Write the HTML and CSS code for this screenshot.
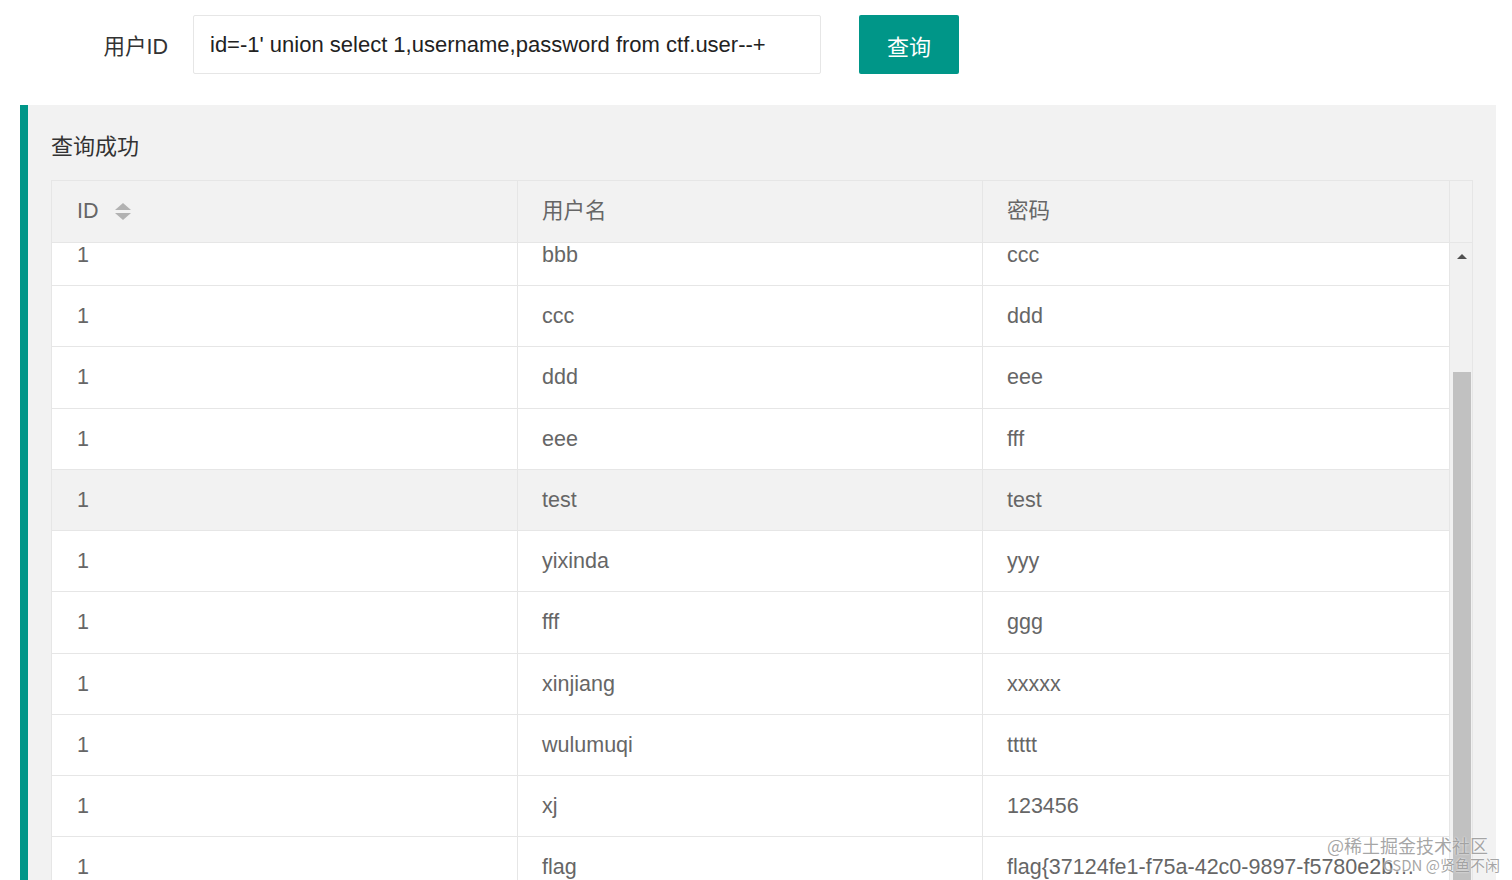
FILE: index.html
```html
<!DOCTYPE html>
<html lang="zh-CN">
<head>
<meta charset="utf-8">
<title>查询</title>
<link rel="stylesheet" href="styles.css">
</head>
<body>
<div class="form">
  <label class="label">用户ID</label>
  <div class="input">id=-1' union select 1,username,password from ctf.user--+</div>
  <button class="btn">查询</button>
</div>
<div class="panel">
  <div class="title">查询成功</div>
  <div class="table">
    <div class="thead">
      <div class="th">ID <span class="sort"><i class="up"></i><i class="down"></i></span></div>
      <div class="th">用户名</div>
      <div class="th">密码</div>
      <div class="th gutter"></div>
    </div>
    <div class="tbody">
      <div class="rows">
        <div class="tr first"><div class="td">1</div><div class="td">bbb</div><div class="td">ccc</div></div>
        <div class="tr"><div class="td">1</div><div class="td">ccc</div><div class="td">ddd</div></div>
        <div class="tr"><div class="td">1</div><div class="td">ddd</div><div class="td">eee</div></div>
        <div class="tr"><div class="td">1</div><div class="td">eee</div><div class="td">fff</div></div>
        <div class="tr hover"><div class="td">1</div><div class="td">test</div><div class="td">test</div></div>
        <div class="tr"><div class="td">1</div><div class="td">yixinda</div><div class="td">yyy</div></div>
        <div class="tr"><div class="td">1</div><div class="td">fff</div><div class="td">ggg</div></div>
        <div class="tr"><div class="td">1</div><div class="td">xinjiang</div><div class="td">xxxxx</div></div>
        <div class="tr"><div class="td">1</div><div class="td">wulumuqi</div><div class="td">ttttt</div></div>
        <div class="tr"><div class="td">1</div><div class="td">xj</div><div class="td">123456</div></div>
        <div class="tr"><div class="td">1</div><div class="td">flag</div><div class="td">flag{37124fe1-f75a-42c0-9897-f5780e2b4c1d}</div></div>
      </div>
      <div class="scrollbar">
        <div class="arrow"><i></i></div>
        <div class="track"><div class="thumb"></div></div>
      </div>
    </div>
  </div>
</div>
<div class="watermark">
  <div class="wm1">@稀土掘金技术社区</div>
  <div class="wm2">CSDN @贤鱼不闲</div>
</div>
</body>
</html>
```
FILE: styles.css
```css
html, body {
  margin: 0;
  padding: 0;
  background: #fff;
  font-family: "Liberation Sans", Arial, "Noto Sans CJK SC", sans-serif;
  overflow: hidden;
  height: 880px;
}
.form {
  display: flex;
  align-items: center;
  padding-top: 15px;
  height: 59px;
}
.label {
  width: 168px;
  text-align: right;
  font-size: 21.5px;
  color: #333;
  margin-right: 25px;
}
.input {
  box-sizing: border-box;
  width: 628px;
  height: 59px;
  border: 1px solid #e6e6e6;
  border-radius: 2px;
  padding-left: 16px;
  font-size: 22px;
  line-height: 57px;
  color: #222;
  margin-right: 38px;
}
.btn {
  width: 100px;
  height: 59px;
  border: 0;
  border-radius: 2px;
  background: #009688;
  color: #fff;
  font-family: "Liberation Sans", "Noto Sans CJK SC", sans-serif;
  font-size: 22px;
  padding: 0;
}
.panel {
  margin: 31px 16px 0 20px;
  border-left: 8px solid #009688;
  background: #f2f2f2;
  padding: 27px 23px 0 23px;
  height: 800px;
}
.title {
  font-size: 22px;
  line-height: 30px;
  color: #333;
  margin-bottom: 18px;
}
.table {
  border: 1px solid #e6e6e6;
  border-bottom: 0;
  background: #fff;
}
.thead {
  display: grid;
  grid-template-columns: 465px 465px 1fr 23px;
  background: #f2f2f2;
  height: 61px;
  border-bottom: 1px solid #e6e6e6;
}
.th {
  font-size: 21.5px;
  color: #666;
  line-height: 61px;
  padding-left: 24px;
  border-left: 1px solid #e6e6e6;
  display: flex;
  align-items: center;
}
.th:first-child { border-left: 0; padding-left: 25px; }
.th.gutter { padding: 0; }
.sort {
  display: inline-flex;
  flex-direction: column;
  gap: 3px;
  margin-left: 16px;
}
.sort i {
  width: 0;
  height: 0;
  border-left: 8px solid transparent;
  border-right: 8px solid transparent;
}
.sort .up { border-bottom: 7px solid #b2b2b2; }
.sort .down { border-top: 7px solid #b2b2b2; }
.tbody {
  display: flex;
  height: 640px;
  overflow: hidden;
}
.rows {
  flex: 1;
  min-width: 0;
}
.tr {
  display: grid;
  grid-template-columns: 465px 465px 1fr;
  height: 60.25px;
  border-bottom: 1px solid #e6e6e6;
  background: #fff;
}
.tr.first { margin-top: -18.25px; }
.tr.hover { background: #f2f2f2; }
.td {
  font-size: 21.5px;
  color: #666;
  line-height: 60px;
  padding: 0 25px 0 24px;
  border-left: 1px solid #e6e6e6;
  white-space: nowrap;
  overflow: hidden;
  text-overflow: ellipsis;
}
.td:first-child { border-left: 0; padding-left: 25px; }
.scrollbar {
  width: 23px;
  border-left: 1px solid #e6e6e6;
  box-sizing: border-box;
  background: #f1f1f1;
  display: flex;
  flex-direction: column;
}
.arrow {
  flex: 0 0 26px;
  display: flex;
  justify-content: center;
  align-items: center;
  background: #f1f1f1;
}
.arrow i {
  width: 0;
  height: 0;
  border-left: 5px solid transparent;
  border-right: 5px solid transparent;
  border-bottom: 5px solid #505050;
  margin-left: 2px;
}
.track {
  flex: 1;
  padding-top: 103px;
}
.thumb {
  width: 18px;
  margin-left: 3px;
  height: 520px;
  background: #c1c1c1;
}
.watermark {
  position: absolute;
  right: 12px;
  bottom: 6px;
  text-align: right;
  font-family: "Noto Sans CJK SC", sans-serif;
  color: rgba(150, 150, 150, 0.85);
  text-shadow: 0 0 2px #fff;
}
.wm1 {
  font-size: 18px;
  line-height: 22px;
  margin-right: 12px;
}
.wm2 {
  font-size: 15px;
  line-height: 18px;
}
```
